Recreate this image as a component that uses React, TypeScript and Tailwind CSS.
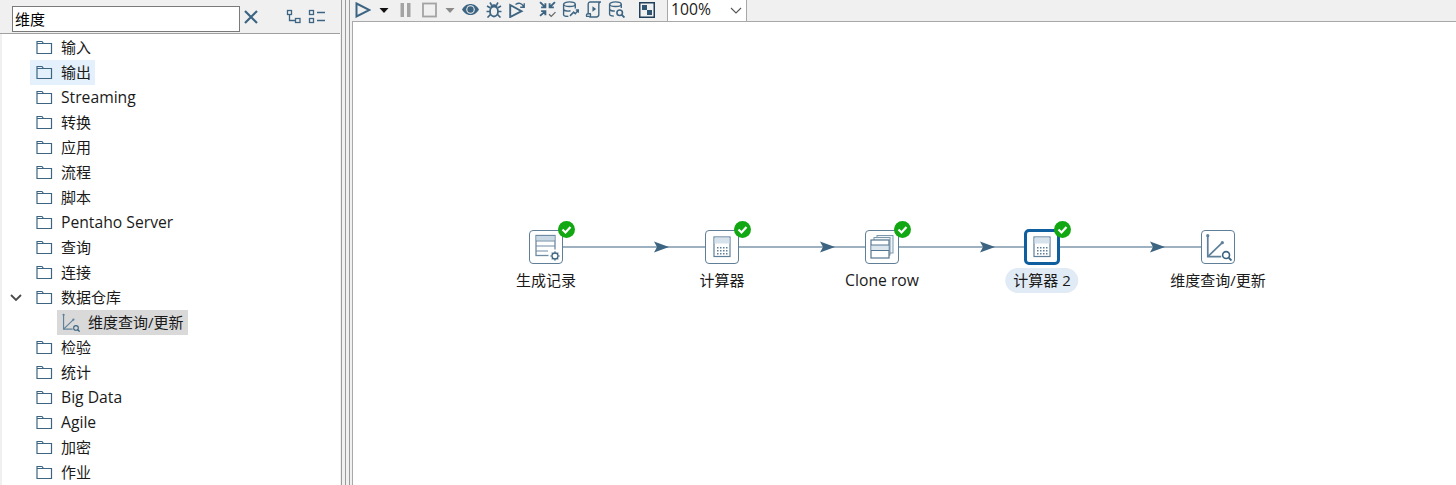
import type { ReactNode } from "react";

const BLUE = "#3d6582";

/** Left tree rows, in display order. */
const CATEGORIES: string[] = [
  "输入",
  "输出",
  "Streaming",
  "转换",
  "应用",
  "流程",
  "脚本",
  "Pentaho Server",
  "查询",
  "连接",
  "数据仓库",
];
const CATEGORIES_AFTER: string[] = ["检验", "统计", "Big Data", "Agile", "加密", "作业"];

/** Latin labels run a little wider than the CJK ones in the reference. */
const labelSize = (label: string) => (/^[A-Za-z]/.test(label) ? "text-[15.7px]" : "text-[15px]");

function Folder() {
  return (
    <svg width="17" height="15" viewBox="0 0 17 15" fill="none" className="shrink-0">
      <path d="M1 3.5V1.5H6L7.5 3.5H15.5V13.5H1V3.5H7.5" stroke={BLUE} strokeWidth="1.2" />
    </svg>
  );
}

function TreeRow({ label, active, open }: { label: string; active?: boolean; open?: boolean }) {
  return (
    <div className="relative flex h-[25px] items-center pl-[28px]">
      {open && (
        <svg width="12" height="8" viewBox="0 0 12 8" fill="none" className="absolute left-[8px] top-[9px]">
          <path d="M1 1L6 6L11 1" stroke="#4a4a4a" strokeWidth="1.8" />
        </svg>
      )}
      <div className={`flex h-[25px] items-center pl-[6px] ${active ? "bg-[#e4f0fb] pr-[4px]" : ""}`}>
        <Folder />
        <span className={`ml-[8px] text-[#1a1a1a] ${labelSize(label)}`}>{label}</span>
      </div>
    </div>
  );
}

function DimensionGlyph({ size }: { size: number }) {
  return (
    <svg width={size} height={size} viewBox="0 0 26 26" fill="none">
      <path d="M3.5 2V22H16" stroke="#5f809a" strokeWidth="1.6" />
      <path d="M3.5 22L17 9" stroke="#5f809a" strokeWidth="1.6" />
      <circle cx="3.5" cy="2.5" r="1.5" fill="#5f809a" />
      <circle cx="17" cy="9" r="1.5" fill="#5f809a" />
      <circle cx="20.5" cy="20.5" r="3.2" stroke={BLUE} strokeWidth="1.5" />
      <path d="M23 23L25.5 25.5" stroke={BLUE} strokeWidth="1.8" />
    </svg>
  );
}

function SidePanel() {
  return (
    <aside className="flex h-full w-[340px] shrink-0 flex-col">
      <div className="flex h-[34px] shrink-0 items-start border-b border-[#a0a0a0] pl-[12px]">
        <input
          readOnly
          value="维度"
          className="mt-[6px] h-[26px] w-[228px] border border-[#7a7a7a] bg-white px-[2px] pb-[2px] text-[15px] text-black outline-none"
        />
        <svg width="16" height="16" viewBox="0 0 16 16" fill="none" className="ml-[3px] mt-[9px]">
          <path d="M2 2L14 14M14 2L2 14" stroke={BLUE} strokeWidth="2.2" />
        </svg>
        <svg width="16" height="16" viewBox="0 0 16 16" fill="none" className="ml-[27px] mt-[9px]">
          <rect x="1.5" y="1.5" width="4" height="4" stroke={BLUE} strokeWidth="1.3" />
          <rect x="9.5" y="9.5" width="4.5" height="4" stroke={BLUE} strokeWidth="1.3" />
          <path d="M3.5 5.5V11.5H9.5" stroke={BLUE} strokeWidth="1.3" />
        </svg>
        <svg width="18" height="16" viewBox="0 0 18 16" fill="none" className="ml-[6px] mt-[9px]">
          <rect x="1.5" y="1.5" width="4" height="4" stroke={BLUE} strokeWidth="1.3" />
          <rect x="1.5" y="9.5" width="4" height="4" stroke={BLUE} strokeWidth="1.3" />
          <path d="M9 3.5H17M9 11.5H17" stroke={BLUE} strokeWidth="1.3" />
        </svg>
      </div>
      <div className="ml-[2px] flex-1 overflow-hidden bg-white pt-[1px]">
        {CATEGORIES.map((label) => (
          <TreeRow key={label} label={label} active={label === "输出"} open={label === "数据仓库"} />
        ))}
        <div className="flex h-[25px] pl-[55px]">
          <div className="flex w-[131px] items-center bg-[#d9d9d9] pl-[4px]">
            <DimensionGlyph size={19} />
            <span className="ml-[8px] text-[15px] text-[#1a1a1a]">维度查询/更新</span>
          </div>
        </div>
        {CATEGORIES_AFTER.map((label) => (
          <TreeRow key={label} label={label} />
        ))}
      </div>
    </aside>
  );
}

function Tool({
  w = 16,
  px,
  className = "",
  children,
}: {
  w?: number;
  px?: number;
  className?: string;
  children: ReactNode;
}) {
  const width = px ?? w;
  return (
    <svg
      width={width}
      height={(16 * width) / w}
      viewBox={`0 0 ${w} 16`}
      fill="none"
      className={`shrink-0 ${className}`}
    >
      {children}
    </svg>
  );
}

function Toolbar() {
  return (
    <div className="flex h-[21px] shrink-0 items-center pb-[2px] pl-[3px]">
      <Tool>
        <path d="M1.5 1.5L14.5 8L1.5 14.5Z" stroke={BLUE} strokeWidth="2" />
      </Tool>
      <Tool w={10} className="ml-[8px]">
        <path d="M0.5 6H9.5L5 11Z" fill="#111" />
      </Tool>
      <Tool w={11} className="ml-[11px]">
        <path d="M0.5 1H4V15H0.5ZM7 1H10.5V15H7Z" fill="#a3a3a3" />
      </Tool>
      <Tool w={15} className="ml-[11px]">
        <rect x="1" y="1.5" width="13" height="13" stroke="#a3a3a3" strokeWidth="1.8" />
      </Tool>
      <Tool w={10} className="ml-[8px]">
        <path d="M0.5 6H9.5L5 11Z" fill="#8a8a8a" />
      </Tool>
      <Tool px={17} className="ml-[7px]">
        <path d="M0 8C3 3.2 6 2.8 8 2.8S13 3.2 16 8C13 12.8 10 13.2 8 13.2S3 12.8 0 8Z" fill={BLUE} />
        <circle cx="8" cy="8" r="4" fill="#f0f0f0" />
        <circle cx="8" cy="8" r="3" fill={BLUE} />
      </Tool>
      <Tool className="ml-[7px]">
        <ellipse cx="8" cy="9.5" rx="4" ry="5" stroke={BLUE} strokeWidth="1.8" />
        <path d="M5.5 5C5.5 2.5 10.5 2.5 10.5 5" stroke={BLUE} strokeWidth="2" />
        <path d="M5.5 3L4 0.5M10.5 3L12 0.5M4.5 6L1 4M11.5 6L15 4M4 9.5H0.5M12 9.5H15.5M4.5 12.5L1.5 15.5M11.5 12.5L14.5 15.5" stroke={BLUE} strokeWidth="1.6" />
      </Tool>
      <Tool className="ml-[7px]">
        <path d="M1.2 3L12.5 9.2L1.2 15Z" stroke={BLUE} strokeWidth="1.9" />
        <path d="M6.5 2.5C9.5 0.5 13 0.8 14.5 4.5M15.2 1.2V5.2H11.2" stroke={BLUE} strokeWidth="1.4" />
      </Tool>
      <Tool px={17} className="ml-[14px]">
        <path d="M1 1L6 6M6 2V6H2M15 1L10 6M10 2V6H14M1 14L6 9.5M6 13.5V9.5H2" stroke={BLUE} strokeWidth="1.8" />
        <path d="M9.5 12.5L11.5 14.5L15.5 10.5" stroke="#666" strokeWidth="1.2" />
      </Tool>
      <Tool px={17} className="ml-[6px]">
        <ellipse cx="7" cy="3" rx="5.5" ry="2.2" stroke={BLUE} strokeWidth="1.3" />
        <path d="M1.5 3V13C1.5 14 3.5 14.5 6 14.5M12.5 3V7M1.5 8C2.5 9.5 6 9.8 8 9.2" stroke={BLUE} strokeWidth="1.3" />
        <path d="M7.5 14L11 10.5L12.5 12L15.5 8.5M13 8.5H15.5V11" stroke={BLUE} strokeWidth="1.4" />
      </Tool>
      <Tool px={17} className="ml-[6px]">
        <path d="M4 14.5H1.5C1 12.5 2 12 3 12V3C3 1.5 4 1 5 1H15C14 1 13 1.5 13 3V13C13 14 12 15 10.5 15H4C5 15 5.5 13.5 5 12H3" stroke={BLUE} strokeWidth="1.3" />
        <path d="M7 5L10.5 7.5L7 10Z" fill={BLUE} />
      </Tool>
      <Tool px={17} className="ml-[6px]">
        <ellipse cx="7" cy="3" rx="5.5" ry="2.2" stroke={BLUE} strokeWidth="1.3" />
        <path d="M1.5 3V12.5C1.5 13.5 3 14 5.5 14.2M12.5 3V6.5M1.5 8C2.5 9.3 4.5 9.5 6.5 9.5" stroke={BLUE} strokeWidth="1.3" />
        <circle cx="11" cy="11" r="2.6" stroke={BLUE} strokeWidth="1.5" />
        <path d="M13 13L15.5 15.5" stroke={BLUE} strokeWidth="1.8" />
      </Tool>
      <Tool className="ml-[14px]">
        <rect x="0.75" y="0.75" width="14.5" height="14.5" stroke="#1f3f5a" strokeWidth="1.5" />
        <rect x="3" y="3" width="5" height="5" fill="#2e5672" />
        <rect x="8" y="8" width="5" height="5" fill="#2e5672" />
      </Tool>
      <div className="relative ml-[12px] flex h-[21px] w-[80px] items-center self-start border-x border-[#a8a8a8] bg-white pb-[2px] pl-[3px] text-[15.7px] leading-[19px] text-[#1a1a1a]">
        100%
        <svg width="12" height="7" viewBox="0 0 12 7" fill="none" className="absolute right-[4px] top-[7px]">
          <path d="M1 1L6 6L11 1" stroke="#555" strokeWidth="1.1" />
        </svg>
      </div>
    </div>
  );
}

function Badge() {
  return (
    <svg width="17" height="17" viewBox="0 0 17 17" className="absolute -right-[12px] -top-[9px]">
      <circle cx="8.5" cy="8.5" r="8.5" fill="#12a812" />
      <path d="M4.5 8.5L7.5 11.5L12.5 6" fill="none" stroke="white" strokeWidth="2.2" />
    </svg>
  );
}

function TableGear() {
  return (
    <svg width="26" height="26" viewBox="0 0 26 26" fill="none" className="overflow-visible">
      <rect x="3" y="1.5" width="19" height="20" fill="#fff" stroke="#6f8ba3" strokeWidth="1.3" />
      <rect x="3.5" y="2" width="18" height="4.5" fill="#c9d8e5" />
      <path d="M3 7H22M3 12H22M3 17H15" stroke="#6f8ba3" strokeWidth="1.1" />
      <rect x="15.5" y="15.5" width="12" height="12" fill="#fff" />
      <circle cx="22" cy="22" r="3" fill="#fff" stroke={BLUE} strokeWidth="1.3" />
      <path d="M22 17.3V18.7M22 25.3V26.7M17.3 22H18.7M25.3 22H26.7M18.7 18.7L19.7 19.7M24.3 24.3L25.3 25.3M18.7 25.3L19.7 24.3M24.3 19.7L25.3 18.7" stroke={BLUE} strokeWidth="1.1" />
    </svg>
  );
}

function Calculator() {
  const keys = [13, 16, 19];
  return (
    <svg width="26" height="26" viewBox="0 0 26 26" fill="none">
      <rect x="5" y="3" width="16" height="19.5" fill="#fff" stroke="#5f7f99" strokeWidth="1.2" />
      <rect x="5.5" y="3.5" width="15" height="6" fill="#d6e2ec" />
      {keys.map((y) =>
        [8, 11, 14, 17].map((x) => <rect key={`${x}-${y}`} x={x} y={y} width="1.5" height="1.5" fill="#5f7f99" />),
      )}
    </svg>
  );
}

function CloneGlyph() {
  return (
    <svg width="26" height="26" viewBox="0 0 26 26" fill="none">
      <rect x="8" y="1.5" width="16" height="17.5" fill="#eef3f7" stroke="#7d97ac" strokeWidth="1" />
      <rect x="5" y="3.5" width="16" height="17.5" fill="#eef3f7" stroke="#7d97ac" strokeWidth="1" />
      <rect x="2" y="6" width="18" height="18" fill="#fff" stroke="#56768f" strokeWidth="1.2" />
      <rect x="2.5" y="11" width="17" height="5" fill="#dbe6ef" />
      <path d="M2 11H20M2 16.5H20" stroke="#56768f" strokeWidth="1" />
    </svg>
  );
}

type Step = {
  label: string;
  pos: string;
  glyph: ReactNode;
  selected?: boolean;
  ok?: boolean;
};

const STEPS: Step[] = [
  { label: "生成记录", pos: "left-[176px] top-[208px]", glyph: <TableGear />, ok: true },
  { label: "计算器", pos: "left-[352px] top-[208px]", glyph: <Calculator />, ok: true },
  { label: "Clone row", pos: "left-[512px] top-[208px]", glyph: <CloneGlyph />, ok: true },
  { label: "计算器 2", pos: "left-[672px] top-[208px]", glyph: <Calculator />, ok: true, selected: true },
  { label: "维度查询/更新", pos: "left-[848px] top-[208px]", glyph: <DimensionGlyph size={28} /> },
];

/** Arrow tip positions, in canvas coordinates. */
const ARROW_TIPS = [316, 482, 642, 812];

function Canvas() {
  return (
    <div className="relative flex-1 border-l border-t border-[#a8a8a8] bg-white">
      <svg className="absolute left-0 top-0" width="1103" height="463" fill="none">
        <path d="M210 225H848" stroke={BLUE} strokeWidth="1.2" />
        {ARROW_TIPS.map((tip) => (
          <path key={tip} d={`M${tip} 225L${tip - 15} 219.5L${tip - 12} 225L${tip - 15} 230.5Z`} fill={BLUE} />
        ))}
      </svg>
      {STEPS.map((step) => (
        <div key={step.label} className={`absolute h-[34px] w-[34px] ${step.pos}`}>
          <div
            className={`flex items-center justify-center bg-white ${
              step.selected
                ? "-m-[1px] h-[36px] w-[36px] rounded-[5px] border-[3px] border-[#0f5f9f]"
                : "h-[34px] w-[34px] rounded-[4px] border border-[#5f7f99]"
            }`}
          >
            {step.glyph}
          </div>
          {step.ok && <Badge />}
          <div className="absolute left-1/2 top-[38px] flex h-[25px] -translate-x-1/2 items-center justify-center whitespace-nowrap">
            <span
              className={`leading-[25px] text-[#1a1a1a] ${labelSize(step.label)} ${
                step.selected ? "rounded-full bg-[#e1ebf5] px-[8px]" : ""
              }`}
            >
              {step.label}
            </span>
          </div>
        </div>
      ))}
    </div>
  );
}

export default function App() {
  return (
    <div className="flex h-[485px] w-[1456px] overflow-hidden bg-[#f0f0f0] font-['Open_Sans','Noto_Sans_CJK_SC',sans-serif]">
      <SidePanel />
      <div className="flex h-full w-[12px] shrink-0 gap-[3px] pl-[1px]">
        <div className="h-full w-[1px] bg-[#9a9a9a]" />
        <div className="h-full w-[1px] bg-[#9a9a9a]" />
        <div className="h-full w-[1px] bg-[#9a9a9a]" />
      </div>
      <div className="flex h-full min-w-0 flex-1 flex-col">
        <Toolbar />
        <Canvas />
      </div>
    </div>
  );
}
